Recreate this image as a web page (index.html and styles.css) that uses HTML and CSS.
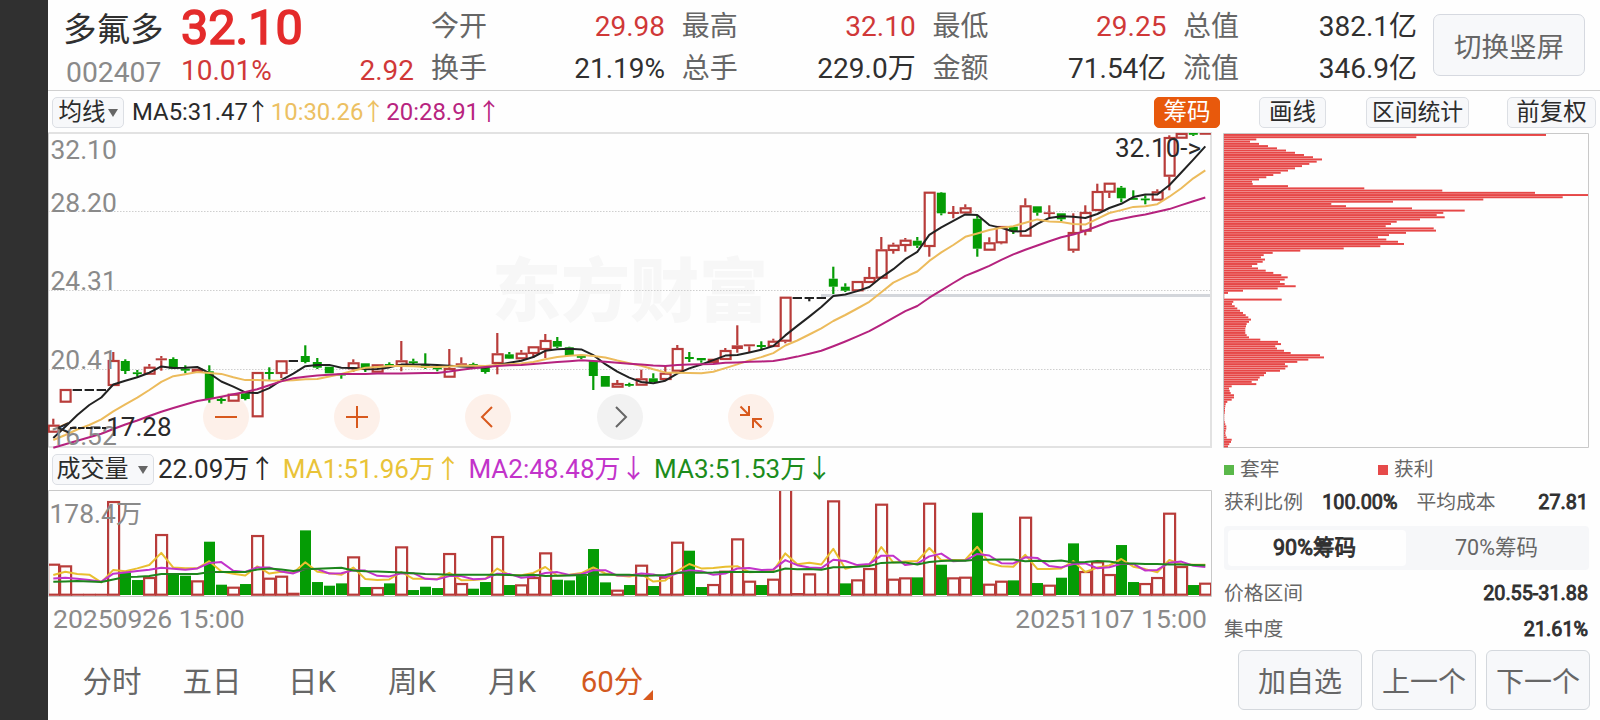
FILE: index.html
```html
<!DOCTYPE html>
<html lang="zh-CN">
<head>
<meta charset="utf-8">
<title>多氟多 002407</title>
<link rel="stylesheet" href="styles.css">
</head>
<body>
<div class="app">
  <aside class="edge"></aside>
  <main class="screen">
    <header class="quote">
      <div class="stock">
        <div class="stock-name">多氟多</div>
        <div class="stock-code">002407</div>
      </div>
      <div class="price">
        <div class="price-last">32.10</div>
        <div class="price-change"><span>10.01%</span><span>2.92</span></div>
      </div>
      <dl class="stats">
        <div class="stat"><dt>今开</dt><dd class="up">29.98</dd></div>
        <div class="stat"><dt>最高</dt><dd class="up">32.10</dd></div>
        <div class="stat"><dt>最低</dt><dd class="up">29.25</dd></div>
        <div class="stat"><dt>总值</dt><dd>382.1亿</dd></div>
        <div class="stat"><dt>换手</dt><dd>21.19%</dd></div>
        <div class="stat"><dt>总手</dt><dd>229.0万</dd></div>
        <div class="stat"><dt>金额</dt><dd>71.54亿</dd></div>
        <div class="stat"><dt>流值</dt><dd>346.9亿</dd></div>
      </dl>
      <button class="rotate">切换竖屏</button>
    </header>

    <div class="toolbar">
      <button class="chip-btn select">均线<i class="caret"></i></button>
      <div class="ma-values">
        <span class="ma-a">MA5:31.47<i class="arrow">↑</i></span>
        <span class="ma-b">10:30.26<i class="arrow">↑</i></span>
        <span class="ma-c">20:28.91<i class="arrow">↑</i></span>
      </div>
      <div class="tools">
        <button class="chip-btn active">筹码</button>
        <button class="chip-btn draw">画线</button>
        <button class="chip-btn range">区间统计</button>
        <button class="chip-btn adjust">前复权</button>
      </div>
    </div>

    <div class="content">
      <section class="charts">
        <div class="price-pane">
          <div class="controls">
            <button class="round"><svg viewBox="0 0 46 46"><path d="M12 23H34"/></svg></button>
            <button class="round"><svg viewBox="0 0 46 46"><path d="M12 23H34M23 12V34"/></svg></button>
            <button class="round"><svg viewBox="0 0 46 46"><path d="M27 13L17 23L27 33"/></svg></button>
            <button class="round muted"><svg viewBox="0 0 46 46"><path d="M19 13L29 23L19 33"/></svg></button>
            <button class="round"><svg viewBox="0 0 46 46"><path d="M12.500 12.500L20.500 20.500M21 12V21H12M33.500 33.500L25.500 25.500M25 34V25H34"/></svg></button>
          </div>
          <svg class="price-chart" viewBox="48 132 1164 317" id="price"></svg>
        </div>
        <div class="volume-bar">
          <button class="chip-btn volume-select">成交量<i class="caret"></i></button>
          <div class="volume-values">
            <span class="ma-a">22.09万↑</span>
            <span class="vol-a">MA1:51.96万↑</span>
            <span class="vol-b">MA2:48.48万↓</span>
            <span class="vol-c">MA3:51.53万↓</span>
          </div>
        </div>
        <svg class="volume-chart" viewBox="48 490 1164 107" id="volume"></svg>
        <div class="dates"><span>20250926 15:00</span><span>20251107 15:00</span></div>
        <nav class="periods">
          <a>分时</a><a>五日</a><a>日K</a><a>周K</a><a>月K</a><a class="current">60分<i class="corner"></i></a>
        </nav>
      </section>

      <section class="chips">
        <svg class="chips-chart" viewBox="1223 132 366 317" id="chips"></svg>
        <div class="legend">
          <span><i class="dot green"></i>套牢</span>
          <span><i class="dot red"></i>获利</span>
        </div>
        <div class="facts"><span>获利比例</span><b>100.00%</b><span class="second">平均成本</span><b class="end">27.81</b></div>
        <div class="segments"><span class="on">90%筹码</span><span>70%筹码</span></div>
        <div class="facts range-row"><span>价格区间</span><b class="end">20.55-31.88</b></div>
        <div class="facts focus-row"><span>集中度</span><b class="end">21.61%</b></div>
        <div class="actions">
          <button class="add">加自选</button><button>上一个</button><button>下一个</button>
        </div>
      </section>
    </div>
  </main>
</div>
<script src="script.js"></script>
</body>
</html>
```
FILE: styles.css
```css
* { box-sizing: border-box; }
body {
  margin: 0;
  width: 1600px;
  height: 720px;
  overflow: hidden;
  background: #fefefe;
  color: #303030;
  font-family: Roboto, "Noto Sans CJK SC", sans-serif;
}
button {
  font-family: inherit;
  margin: 0;
  padding: 0;
  color: inherit;
  white-space: nowrap;
}
i { font-style: normal; }
svg { display: block; }
.app { display: flex; height: 720px; }
.edge { width: 48px; flex: none; background: #303030; }
.screen { width: 1552px; flex: none; display: flex; flex-direction: column; }

.quote {
  height: 91px;
  flex: none;
  display: flex;
  border-bottom: 1px solid #d0d0d0;
}
.stock { width: 133px; flex: none; padding: 10px 0 0 15px; }
.stock-name { font-size: 33.500px; line-height: 40px; white-space: nowrap; }
.stock-code { font-size: 28.300px; line-height: 32px; padding: 7px 0 0 3px; color: #8a8a8a; }
.price { width: 233px; flex: none; }
.price-last {
  padding-top: 3px;
  font-size: 48.500px;
  line-height: 50px;
  font-weight: 400;
  -webkit-text-stroke: 1.600px #e42b2b;
  color: #e42b2b;
}
.price-change {
  display: flex;
  justify-content: space-between;
  padding-top: 2px;
  font-size: 28px;
  line-height: 32px;
  color: #d03838;
}
.stats {
  width: 986px;
  flex: none;
  margin: 0 0 0 17px;
  padding-top: 6px;
  display: grid;
  grid-template-columns: repeat(4, 234px);
  grid-auto-rows: 42px;
  column-gap: 16.700px;
  font-size: 28px;
  line-height: 42px;
}
.stat { display: flex; justify-content: space-between; }
.stat dt { color: #666; }
.stat dd { margin: 0; }
.stat .up { color: #d03838; }
.rotate {
  width: 152px;
  height: 62px;
  margin: 14px 15px 0 auto;
  border: 1px solid #d6d9e0;
  border-radius: 7px;
  background: #f7f8fa;
  font-size: 27.500px;
  color: #666;
}

.toolbar { height: 41px; flex: none; display: flex; align-items: flex-start; padding: 6px 4px 0 4px; }
.chip-btn {
  height: 31px;
  border: 1px solid #dcdfe4;
  border-radius: 5px;
  background: #f7f8fa;
  font-size: 23.500px;
  line-height: 29px;
  color: #2c2c2c;
}
.select, .volume-select { display: flex; align-items: center; justify-content: center; }
.select { width: 72px; gap: 2px; }
.caret {
  border: 5px solid transparent;
  border-top: 8px solid #666;
  border-bottom: 0;
}
.ma-values { display: flex; gap: 2px; margin-left: 8px; font-size: 23.900px; line-height: 30px; }
.arrow { margin: 0 -1px 0 -2px; }
.ma-a { color: #2a2a2a; }
.ma-b { color: #ecc062; }
.ma-c { color: #b8247f; }
.tools { display: flex; margin-left: auto; }
.active { width: 66px; border-color: #e8590c; background: #e8590c; color: #fff; }
.draw { width: 67px; margin-left: 39px; }
.range { width: 103px; margin-left: 40px; font-size: 22.800px; }
.adjust { width: 89px; margin-left: 38px; }

.content { display: flex; flex: 1; }
.charts { width: 1164px; flex: none; }
.price-pane { position: relative; height: 317px; }
.price-chart { position: relative; width: 1164px; height: 317px; pointer-events: none; }
.controls { position: absolute; left: 155px; top: 262px; display: flex; gap: 85.200px; }
.round {
  width: 46px;
  height: 46px;
  border: 0;
  border-radius: 50%;
  background: #fdf0e9;
}
.round svg { width: 46px; height: 46px; fill: none; stroke: #d8591d; stroke-width: 2; }
.muted { background: #f2f2f2; }
.muted svg { stroke: #666; }
.volume-bar { height: 41px; display: flex; padding: 5px 0 0 4px; }
.volume-select { width: 102px; gap: 9px; font-size: 24px; }
.volume-select { padding-right: 2px; }
.volume-values { display: flex; gap: 7.500px; margin-left: 4px; font-size: 26px; line-height: 30px; white-space: nowrap; }
.vol-a { color: #e9c338; }
.vol-b { color: #c233ca; }
.vol-c { color: #1c8c1c; }
.volume-chart { width: 1164px; height: 107px; }
.dates {
  display: flex;
  justify-content: space-between;
  padding: 6px 5px 0 5px;
  font-size: 26.500px;
  line-height: 32px;
  color: #8a8a8a;
}
.periods { display: flex; padding: 22px 0 0 14px; font-size: 29.500px; line-height: 50px; color: #666; }
.periods a { position: relative; width: 100px; text-align: center; }
.periods .current { color: #d2591f; }
.corner {
  position: absolute;
  left: 81px;
  top: 33px;
  border: 5px solid #d8591d;
  border-top-color: transparent;
  border-left-color: transparent;
}

.chips { width: 366px; margin-left: 11px; color: #666; }
.chips-chart { width: 366px; height: 317px; }
.legend { display: grid; grid-template-columns: 154px 1fr; padding: 6px 0 0 1px; font-size: 19.700px; line-height: 30px; }
.legend span { display: flex; align-items: center; gap: 6px; }
.dot { width: 10px; height: 10px; }
.green { background: #5ab84a; }
.red { background: #e64a4a; }
.facts { display: flex; padding: 0 1px; font-size: 19.800px; line-height: 30px; margin-top: 3px; }
.facts b { color: #303030; font-weight: 400; -webkit-text-stroke: .9px #303030; margin-left: 19px; }
.facts .second { margin-left: 19px; }
.facts .end { margin-left: auto; }
.segments {
  display: flex;
  height: 44px;
  margin: 8px 0 0 1px;
  padding: 4px;
  border-radius: 4px;
  background: #f6f7f9;
  font-size: 21.500px;
  line-height: 36px;
  text-align: center;
}
.segments span { width: 178px; border-radius: 4px; text-indent: 3px; }
.segments .on { background: #fefefe; color: #303030; -webkit-text-stroke: .9px #303030; text-indent: -5px; }
.range-row { margin-top: 9px; }
.focus-row { margin-top: 6px; }
.actions { display: flex; gap: 10px; margin: 5px -2px 0 15px; }
.actions button {
  width: 104px;
  height: 60px;
  border: 1px solid #d4d8dd;
  border-radius: 6px;
  background: #f7f8fa;
  font-size: 28px;
  color: #666;
}
.actions .add { width: 124px; }

.frame { fill: none; stroke: #e2e2e2; stroke-width: 2; }
.thin { stroke: #c9c9c9; stroke-width: 1; }
.grid { stroke: #cfcfcf; stroke-width: 1; stroke-dasharray: 1.500 1.500; }
.level { stroke: #d3d6db; stroke-width: 3; }
.axis { font-size: 26.400px; fill: #8a8a8a; }
.mark { font-size: 26px; fill: #2a2a2a; }
.watermark { font: 900 69px "Noto Sans CJK SC", sans-serif; fill: #f7f7f7; }
.rise { fill: #fefefe; stroke: #b83c3a; stroke-width: 2.200; }
.rise-solid { fill: #b83c3a; }
.fall { fill: #059c05; }
.flat { fill: #222; }
.line { fill: none; stroke-width: 2; stroke-linejoin: round; }
.black { stroke: #222; }
.amber { stroke: #ecbb5c; }
.magenta { stroke: #b5227e; }
.yellow { stroke: #e9bf30; }
.violet { stroke: #c233ca; }
.forest { stroke: #1c851c; }
.chip-row { fill: #e64747; }
```
FILE: script.js
```javascript
const X0 = 53.3, STEP = 12;
const cx = i => X0 + STEP * i;
const rect = (cls, x, y, w, h) => `<rect class="${cls}" x="${x}" y="${y}" width="${w}" height="${h}"/>`;

// [kind, high, body top, body bottom, low]; r = rise, g = fall, k = unchanged
const candles = [
['r',418.7,424.7,432.7,432.7],['r',389,389,402.7,402.7],['k',389.7,389,391,391],['k',389.7,389,391,391],['k',389.7,389,391,391],
['r',352,360,386,386],['g',359.3,361,371,374],['g',370,372.3,374,376.7],['r',364,366.7,374.7,374.7],['r',356,358.3,360.3,370.7],
['g',357.3,359,368.7,368.7],['g',365.3,368.7,370.7,373.3],['r',368.7,368.7,372,372],['g',365.3,371.3,399,402.7],['g',396.7,399,401,403.7],
['r',393.7,393.7,401.7,401.7],['g',393.3,393.3,399,400.3],['r',372,372,417.3,417.3],['g',367.3,372,374,379.7],['r',360.3,360.3,374,378],
['k',360,360,362,362],['g',345.3,356,362,363.3],['g',358,362,367.7,369],['g',366.7,366.7,373.3,373.3],['g',373,373.7,375.3,378.7],
['r',359.3,362.3,369.3,372],['g',363.3,363.3,368.7,372],['r',364.3,364.3,372.7,372.7],['g',362.3,364,365.7,366],['r',341,360.3,366,371.3],
['g',358.7,361.3,363,364],['g',353.3,364,368,369],['g',367,367.3,369.3,371.3],['r',349,368,377.7,377.7],['r',357.3,363.3,365,365],
['g',362.7,364,366,366],['g',367.7,367.7,372,373.7],['r',333,353.3,364,374.3],['g',352,354.3,358.7,359],['r',350,352.7,359.3,359.3],
['r',346.3,346.3,354,358],['r',334,340,350,358],['g',337,341,346.7,348],['g',346.7,347.3,356,356],['g',354.7,356,357.5,359],
['g',360.7,360.7,376,390],['g',376,376,386.7,386.7],['r',380,383,387.7,387.7],['g',382.7,384,385.5,386.7],['r',369.7,378.3,385.7,385.7],
['g',373.3,378.3,382,382],['r',366,372.7,380,380],['r',345,348,371.7,371.7],['g',352,357,359,362],['g',358,358,360.3,362.7],
['r',358.7,358.7,363,363],['r',348,350,360,360],['r',325.3,345.3,349,352.7],['r',344.3,344.3,346.3,352],['g',341.3,345,347,349.3],
['r',338.7,340.7,347,347],['r',296.7,296.7,341.7,343.3],['k',297,297,299,299],['k',297,297,299,301.3],['k',297,297,299,299],
['g',266.7,278.7,286.7,294],['g',283.3,286.7,290.7,292],['r',281,281,291.3,291.3],['r',267,277,283,283],['r',237,249.3,278.7,278.7],
['r',242.7,244.7,251,253.7],['r',238,239.7,246,251.7],['g',237,240.7,245.7,248],['r',191.7,191.7,247,256.7],['g',192,192.7,213.3,215.3],
['r',206,212,214,218.3],['r',204.3,207.3,213.5,213.5],['g',215.3,218.7,248.7,256.7],['r',237.3,242.3,250.7,250.7],['r',226,226,243.3,244.3],
['g',226.7,226.7,231.3,234],['r',198.3,205.3,236.7,236.7],['g',206.3,206.3,212.7,215.7],['r',205.3,212.3,214,217],['g',213.3,213.3,219.3,221],
['r',213.3,232,250.7,252.7],['r',205.3,212,231.7,235.3],['r',183.7,191,211,211],['r',182.7,182.7,192.7,198],['g',186,187.7,198.3,202.3],
['g',190.3,198,199.5,199.5],['g',195.3,198.5,200,204.3],['r',189.3,191.3,200.7,200.7],['r',135.3,137,176.7,190.3],['r',133,133,138.7,138.7],
['g',133,133,134.7,136],['r',133,133,134,134]
];

// Bar colour and height in thirds of a pixel
const volumes = ('r96 r91 r4 r4 r4 r284 g70 g47 r56 r185 g64 g60 r46 g162 g33 r27 g35 r182 r54 r60 r9 g196 g41 g30 g37 r118 g26 r26 g37 r148 ' +
'g17 g27 g23 r128 r38 g21 g41 r179 g32 r34 r56 r130 g48 g46 g59 g140 g40 r18 g32 r93 g29 r57 r162 g135 g26 r35 r75 r172 r45 g32 ' +
'r51 r335 r8 r67 r7 r286 g37 r49 r83 r276 r51 r55 g55 r279 g93 r55 r57 g249 r36 r45 g46 r237 g38 r33 g54 g157 r74 r103 r65 g152 ' +
'g41 r38 r56 r249 r89 g32 r39').split(' ').map(s => [s[0], +s.slice(1)]);

function average(values, n, lead) {
  return values.map((v, i) => i < n - 1 ? lead[i]
    : values.slice(i - n + 1, i + 1).reduce((a, b) => a + b, 0) / n);
}
const line = (cls, ys) => `<polyline class="line ${cls}" points="${ys.map((y, i) => cx(i).toFixed(1) + ',' + y.toFixed(1)).join(' ')}"/>`;

function candle([kind, high, top, bottom, low], i) {
  const x = cx(i);
  const solid = { r: 'rise-solid', g: 'fall', k: 'flat' }[kind];
  const half = kind === 'g' ? 4.5 : kind === 'k' ? 4.7 : 5.6;
  let out = '';
  if (high < top) out += rect(solid, x - 1.1, high, 2.2, top - high);
  if (low > bottom) out += rect(solid, x - 1.1, bottom, 2.2, low - bottom);
  if (kind === 'r' && bottom - top > 4.5) return out + rect('rise', x - 4.6, top + 1, 9.9, bottom - top - 2);
  return out + rect(solid, x - half, top, half * 2, Math.max(bottom - top, 1.8));
}

function drawPrice() {
  const closes = candles.map(c => c[0] === 'r' ? c[2] + .9 : c[3] - .4);
  let s = '<text class="watermark" x="492" y="316">东方财富</text>';
  for (const y of [211.5, 290.5, 369.5]) s += `<line class="grid" x1="48" x2="1211" y1="${y}" y2="${y}"/>`;
  s += '<line class="level" x1="821" x2="1211" y1="295.5" y2="295.5"/>';
  s += '<path class="frame" d="M48 133H1211V447H48"/>';
  s += '<path class="frame thin" d="M48.5 133V447"/>';
  s += candles.map(candle).join('');
  s += line('black', average(closes, 5, [438, 426.7, 415, 405]));
  s += line('amber', average(closes, 10, [440, 435, 429.5, 425, 419.3, 411.3, 404.3, 397.7, 390]));
  s += line('magenta', average(closes, 20, [447.7, 444.2, 440.7, 437.2, 433.7, 429, 424.5, 420.5, 416, 411.7, 408, 404.5, 401, 399, 396.7, 394.3, 392, 389.3, 385.3]));
  for (const [t, y] of [['32.10', 159], ['28.20', 212], ['24.31', 290], ['20.41', 369], ['16.52', 444.5]])
    s += `<text class="axis" x="50.5" y="${y}">${t}</text>`;
  s += '<text class="mark" x="57" y="436">&lt;</text>';
  s += '<path class="line black" stroke-dasharray="6.5 1.5" d="M70 428H106"/>';
  s += '<text class="mark" x="171.5" y="436" text-anchor="end">17.28</text>';
  s += '<text class="mark" x="1115" y="157">32.10-&gt;</text>';
  document.getElementById('price').innerHTML = s;
}

function drawVolume() {
  const base = 595.7;
  const h = volumes.map(v => v[1]);
  const toY = a => a.map(v => base - v / 3);
  const lead = a => a.map(c => 467 - c);
  let s = '';
  volumes.forEach(([kind, v], i) => {
    const x = cx(i), t = v / 3;
    if (kind === 'g') s += rect('fall', x - 5.3, base - t, 11, t - .7);
    else if (t < 3.5) s += rect('rise-solid', x - 6.3, base - Math.max(t, 2), 12.6, Math.max(t, 2));
    else s += rect('rise', x - 5.2, base - t + 1, 11, t - 2);
  });
  s += line('yellow', toY(average(h, 5, lead([405, 395, 402, 404]))));
  s += line('violet', toY(average(h, 10, lead([415, 413, 416, 420, 425, 401, 397, 393, 389]))));
  s += line('forest', toY(average(h, 20, lead([425, 424, 423, 424, 426, 418, 411, 410, 408, 402, 402, 402, 402, 396, 396, 396, 396, 388, 385]))));
  s += '<path class="frame thin" d="M48.5 596.5V490.5H1211.5V596.5Z"/>';
  s += '<text class="axis" x="49.5" y="523">178.4万</text>';
  document.getElementById('volume').innerHTML = s;
}

function drawChips() {
  const tips = [1008,619,139,120,147,174,201,228,255,282,309,336,320,298,276,255,234,212,190,169,147,126,128,234,463,697,975,1134,1058,820,
    549,364,408,606,764,700,680,704,630,560,543,527,671,678,588,537,504,529,564,582,511,401,271,188,161,153,165,158,142,126,
    144,167,190,214,233,224,210,224,257,203,99,54,43,43,215,70,66,74,82,90,99,107,115,123,117,110,108,106,106,106,
    110,117,151,204,213,196,201,222,242,330,342,295,262,225,233,226,210,168,162,149,144,125,139,65,57,59,62,72,72,65,
    52,47,46,45,45,44,43,43,43,44,46,49,49,47,46,47,50,65,63,58,54];
  let s = '<path class="frame thin" d="M1223.5 133.5H1588.5V447.5H1223.5Z"/>';
  tips.forEach((t, i) => { s += rect('chip-row', 1224, (134 + i * 2.2245).toFixed(2), ((t - 42) / 3).toFixed(1), 1.95); });
  document.getElementById('chips').innerHTML = s;
}

drawPrice();
drawVolume();
drawChips();
```
